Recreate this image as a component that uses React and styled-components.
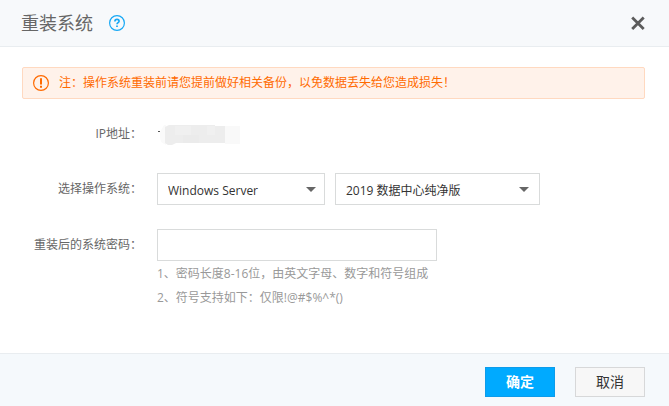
import React, { useState } from 'react'
import styled, { createGlobalStyle } from 'styled-components'

const GlobalStyle = createGlobalStyle`
  * {
    box-sizing: border-box;
  }
  body {
    margin: 0;
    background: #fff;
    color: #666;
    font-family: "Open Sans", "Noto Sans CJK SC", sans-serif;
    font-size: 12px;
  }
  button, input, select {
    font-family: inherit;
  }
`;

const Dialog = styled.div`
  display: flex;
  flex-direction: column;
  min-height: 100vh;
`;

const Header = styled.header`
  display: flex;
  align-items: center;
  height: 47px;
  padding: 0 24px 0 21px;
  background: #f7f9fb;
  border-bottom: 1px solid #e9edf0;
`;

const Title = styled.h1`
  margin: 0 16px 0 0;
  font-size: 18px;
  font-weight: 400;
  line-height: 24px;
`;

const IconButton = styled.button`
  display: flex;
  padding: 0;
  border: 0;
  background: none;
  cursor: pointer;
  margin-left: ${props => props.$end ? 'auto' : '0'};
`;

const Content = styled.main`
  flex: 1;
  padding: 20px 24px 43px 22px;
`;

const Warning = styled.div`
  display: flex;
  align-items: center;
  gap: 10px;
  height: 32px;
  margin-bottom: 20px;
  padding: 0 10px;
  background: #fff2ea;
  border: 1px solid #ffd9c0;
  border-radius: 2px;
  color: #ff6a00;
  line-height: 20px;
`;

const Form = styled.form`
  display: flex;
  flex-direction: column;
  gap: 24px;
`;

const Row = styled.div`
  display: grid;
  grid-template-columns: 120px 1fr;
  column-gap: 15px;
`;

const Label = styled.label`
  text-align: right;
  line-height: ${props => props.$short ? '30px' : '32px'};
`;

const Field = styled.div`
  display: flex;
  align-items: center;
  gap: 10px;
`;

const SelectBox = styled.div`
  display: grid;
  align-items: center;
  width: ${props => props.$wide ? '205px' : '168px'};

  > * {
    grid-area: 1 / 1;
  }
  svg {
    justify-self: end;
    margin-right: ${props => props.$wide ? '11px' : '9px'};
    pointer-events: none;
  }
`;

const Select = styled.select`
  appearance: none;
  width: 100%;
  height: 32px;
  padding: 2px 24px 0 10px;
  border: 1px solid #d9dbdb;
  border-radius: 0;
  background: #fff;
  color: #333;
  font-size: 12px;
`;

const PasswordInput = styled.input`
  width: 280px;
  height: 32px;
  padding: 0 10px;
  border: 1px solid #d9dbdb;
  font-size: 12px;
`;

const Hints = styled.div`
  padding-top: 1px;
  color: #999;
  line-height: 24px;
`;

const Footer = styled.footer`
  display: flex;
  justify-content: flex-end;
  gap: 20px;
  padding: 13px 24px 9px;
  background: #f5f9fc;
  border-top: 1px solid #e9edf0;
`;

const Button = styled.button`
  width: 70px;
  height: 30px;
  padding: 0 0 2px;
  border: 1px solid ${props => props.$primary ? '#0d9cea' : '#d7d8d9'};
  background: ${props => props.$primary ? '#00aaff' : '#f7f7f7'};
  color: ${props => props.$primary ? '#fff' : '#333'};
  font-size: 14px;
  font-weight: ${props => props.$primary ? 700 : 400};
  cursor: pointer;
`;

const HelpIcon = () => (
  <svg width="16" height="16" viewBox="0 0 16 16" fill="none" stroke="#16a8f5">
    <circle cx="8" cy="8" r="7.4" strokeWidth="1.2" />
    <path d="M5.9 6.4C5.9 5.1 6.8 4.4 8 4.4s2.1.7 2.1 1.8C10.1 7.6 8 7.7 8 9.3" strokeWidth="1.6" />
    <path d="M8 10.4V12" strokeWidth="1.7" />
  </svg>
)

const WarnIcon = () => (
  <svg width="16" height="16" viewBox="0 0 16 16" fill="none" stroke="#ff6a00">
    <circle cx="8" cy="8" r="7.4" strokeWidth="1.2" />
    <path d="M8 3.2V9.4M8 10.8V12.7" strokeWidth="2" />
  </svg>
)

const CloseIcon = () => (
  <svg width="14" height="14" viewBox="0 0 14 14" stroke="#5c5c5c" strokeWidth="2.8">
    <path d="M1.2 1.5l11.5 11.5M12.7 1.5l-11.5 11.5" />
  </svg>
)

const Caret = () => (
  <svg width="10" height="5" viewBox="0 0 10 5">
    <path d="M0 0h10L5 5z" fill="#666" />
  </svg>
)

// the address is hidden behind a mosaic
const MaskedAddress = () => (
  <svg width="84" height="24" viewBox="0 0 84 24" role="img" aria-label="IP">
    <path d="M1 9h2v1H1z" fill="#555" />
    <path d="M3 10l4-7h2v20l-5-3-1-5z" fill="#fafafa" />
    <path d="M8 5l4-2h46v1h10v17H19l-4 2h-4l-3-2z" fill="#ededed" />
    <path d="M18 4h16v9H18zM50 4h8v9h-8z" fill="#f0f0f0" />
    <path d="M26 13h16v8H26z" fill="#ebebeb" />
    <path d="M68 4h15v18H68z" fill="#f9f9f9" />
  </svg>
)

const App = () => {
  const [system, setSystem] = useState('windows')
  const [version, setVersion] = useState('2019')
  const [password, setPassword] = useState('')

  return (
    <Dialog role="dialog" aria-labelledby="title">
      <GlobalStyle />
      <Header>
        <Title id="title">重装系统</Title>
        <IconButton type="button" aria-label="帮助"><HelpIcon /></IconButton>
        <IconButton type="button" aria-label="关闭" $end><CloseIcon /></IconButton>
      </Header>
      <Content>
        <Warning>
          <WarnIcon />
          <span>注：操作系统重装前请您提前做好相关备份，以免数据丢失给您造成损失！</span>
        </Warning>
        <Form id="reinstall" onSubmit={e => e.preventDefault()}>
          <Row>
            <Label as="span" $short>IP地址：</Label>
            <Field><MaskedAddress /></Field>
          </Row>
          <Row>
            <Label htmlFor="system">选择操作系统：</Label>
            <Field>
              <SelectBox>
                <Select id="system" value={system} onChange={e => setSystem(e.target.value)}>
                  <option value="windows">Windows Server</option>
                </Select>
                <Caret />
              </SelectBox>
              <SelectBox $wide>
                <Select aria-label="系统版本" value={version} onChange={e => setVersion(e.target.value)}>
                  <option value="2019">2019 数据中心纯净版</option>
                </Select>
                <Caret />
              </SelectBox>
            </Field>
          </Row>
          <Row>
            <Label htmlFor="password">重装后的系统密码：</Label>
            <div>
              <Field>
                <PasswordInput id="password" type="password" aria-describedby="hints" value={password} onChange={e => setPassword(e.target.value)} />
              </Field>
              <Hints id="hints">
                <div>1、密码长度8-16位，由英文字母、数字和符号组成</div>
                <div>2、符号支持如下：仅限!@#$%^*()</div>
              </Hints>
            </div>
          </Row>
        </Form>
      </Content>
      <Footer>
        <Button type="submit" form="reinstall" $primary>确定</Button>
        <Button type="button">取消</Button>
      </Footer>
    </Dialog>
  )
}

export default App
